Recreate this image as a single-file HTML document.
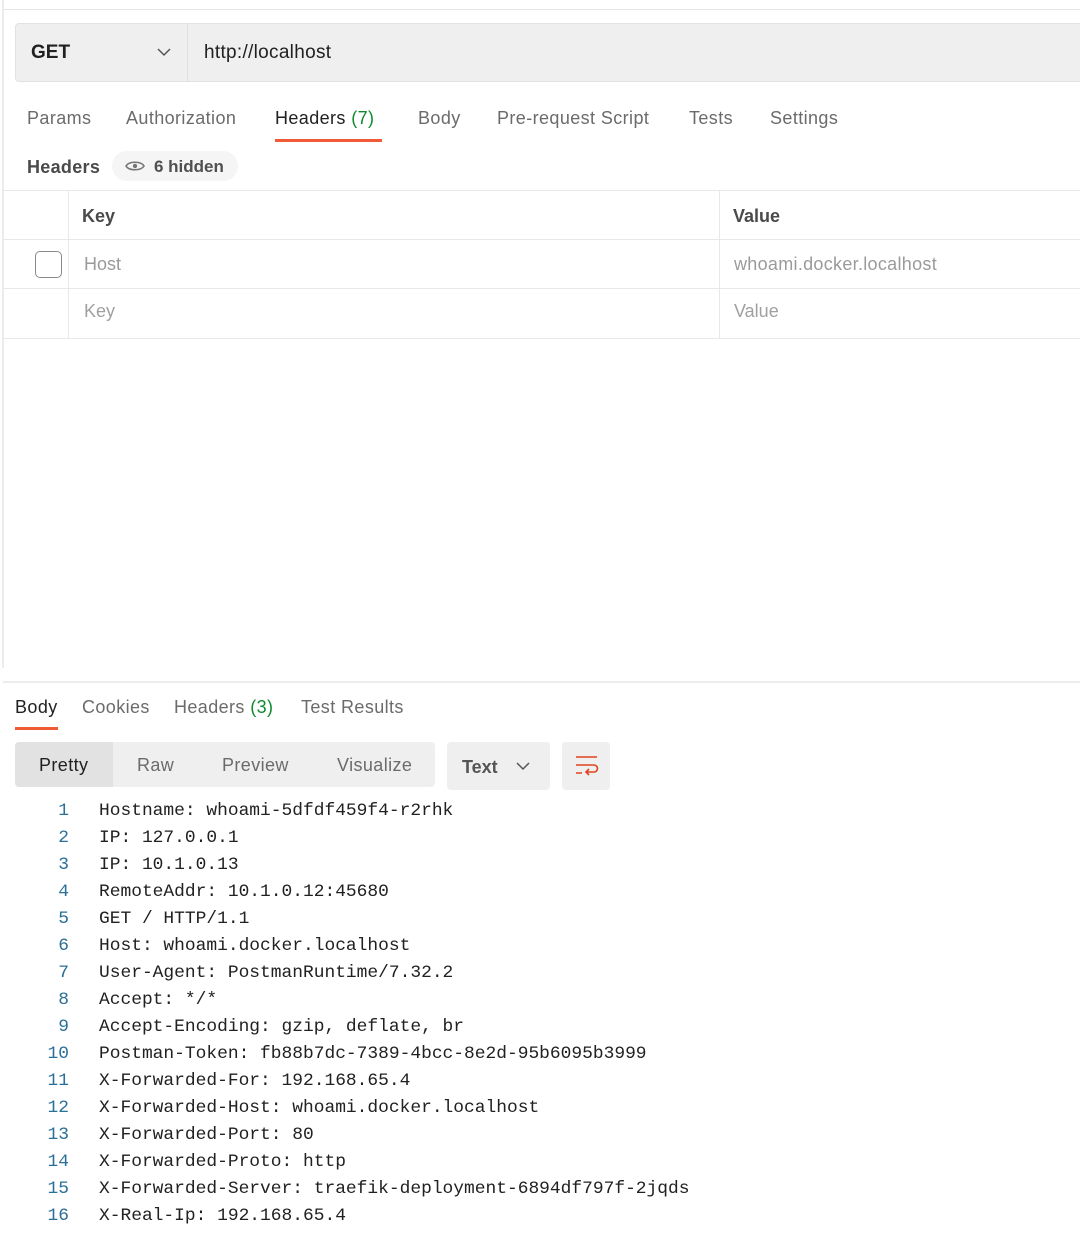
<!DOCTYPE html>
<html><head><meta charset="utf-8"><style>
*{margin:0;padding:0;box-sizing:border-box}
body{width:1080px;height:1234px;background:#fff;position:relative;overflow:hidden;font-family:"Liberation Sans",sans-serif;color:#212121}
.a{position:absolute;white-space:nowrap}
.t{font-size:18px;color:#6b6b6b;letter-spacing:0.4px}
.code{font-family:"Liberation Mono",monospace;font-size:17.9px;color:#212121}
.ln{position:absolute;width:69px;text-align:right;font-family:"Liberation Mono",monospace;font-size:17.9px;color:#2a6f97}
</style></head><body>
<div class="a" style="left:2px;top:0;width:2px;height:668px;background:#ececec"></div>
<div class="a" style="left:3px;top:9px;width:1077px;height:1px;background:#e6e6e6"></div>
<div class="a" style="left:15px;top:23px;width:1080px;height:59px;background:#efefef;border:1px solid #e2e2e2;border-radius:4px"></div>
<div class="a" style="left:187px;top:24px;width:1px;height:57px;background:#e0e0e0"></div>
<div class="a" style="left:31px;top:42px;font-size:19px;font-weight:bold;color:#212121">GET</div>
<svg class="a" style="left:156px;top:46px" width="16" height="12"><path d="M2 3l6 6 6-6" fill="none" stroke="#555" stroke-width="1.5"/></svg>
<div class="a" style="left:204px;top:42px;font-size:19px;color:#212121;letter-spacing:0.3px">http://localhost</div>

<div class="a t" style="left:27px;top:108px">Params</div>
<div class="a t" style="left:126px;top:108px">Authorization</div>
<div class="a t" style="left:275px;top:108px;color:#212121">Headers <span style="color:#0f8a2e">(7)</span></div>
<div class="a" style="left:275px;top:139px;width:107px;height:3px;background:#f05a36"></div>
<div class="a t" style="left:418px;top:108px">Body</div>
<div class="a t" style="left:497px;top:108px">Pre-request Script</div>
<div class="a t" style="left:689px;top:108px">Tests</div>
<div class="a t" style="left:770px;top:108px">Settings</div>

<div class="a" style="left:27px;top:157px;font-size:18px;font-weight:bold;color:#4a4a4a;letter-spacing:0.3px">Headers</div>
<div class="a" style="left:112px;top:151px;width:126px;height:30px;background:#f5f5f5;border-radius:15px"></div>
<svg class="a" style="left:125px;top:159px" width="20" height="14"><path d="M1 7C4 2 16 2 19 7C16 12 4 12 1 7Z" fill="none" stroke="#777" stroke-width="1.6"/><circle cx="10" cy="7" r="2.2" fill="#777"/></svg>
<div class="a" style="left:154px;top:157px;font-size:17px;font-weight:bold;color:#505050">6 hidden</div>

<div class="a" style="left:3px;top:190px;width:1077px;height:1px;background:#e8e8e8"></div>
<div class="a" style="left:3px;top:239px;width:1077px;height:1px;background:#e8e8e8"></div>
<div class="a" style="left:3px;top:288px;width:1077px;height:1px;background:#e8e8e8"></div>
<div class="a" style="left:3px;top:338px;width:1077px;height:1px;background:#e8e8e8"></div>
<div class="a" style="left:68px;top:190px;width:1px;height:148px;background:#e8e8e8"></div>
<div class="a" style="left:719px;top:190px;width:1px;height:148px;background:#e8e8e8"></div>
<div class="a" style="left:82px;top:206px;font-size:18px;font-weight:bold;color:#4a4a4a">Key</div>
<div class="a" style="left:733px;top:206px;font-size:18px;font-weight:bold;color:#4a4a4a">Value</div>
<div class="a" style="left:35px;top:251px;width:27px;height:27px;border:1.5px solid #8a8a8a;border-radius:5px"></div>
<div class="a" style="left:84px;top:254px;font-size:18px;color:#9a9a9a">Host</div>
<div class="a" style="left:734px;top:254px;font-size:18px;color:#9a9a9a;letter-spacing:0.3px">whoami.docker.localhost</div>
<div class="a" style="left:84px;top:301px;font-size:18px;color:#a0a0a0">Key</div>
<div class="a" style="left:734px;top:301px;font-size:18px;color:#a0a0a0">Value</div>

<div class="a" style="left:3px;top:681px;width:1077px;height:2px;background:#ececec"></div>
<div class="a t" style="left:15px;top:697px;color:#212121">Body</div>
<div class="a" style="left:15px;top:727px;width:43px;height:3px;background:#f05a36"></div>
<div class="a t" style="left:82px;top:697px">Cookies</div>
<div class="a t" style="left:174px;top:697px">Headers <span style="color:#0f8a2e">(3)</span></div>
<div class="a t" style="left:301px;top:697px">Test Results</div>

<div class="a" style="left:15px;top:742px;width:420px;height:45px;background:#efefef;border-radius:4px"></div>
<div class="a" style="left:15px;top:742px;width:98px;height:45px;background:#e2e2e2;border-radius:4px 0 0 4px"></div>
<div class="a t" style="left:39px;top:755px;color:#212121">Pretty</div>
<div class="a t" style="left:137px;top:755px">Raw</div>
<div class="a t" style="left:222px;top:755px">Preview</div>
<div class="a t" style="left:337px;top:755px">Visualize</div>
<div class="a" style="left:447px;top:742px;width:103px;height:48px;background:#efefef;border-radius:4px"></div>
<div class="a" style="left:462px;top:757px;font-size:18px;font-weight:bold;color:#555">Text</div>
<svg class="a" style="left:515px;top:760px" width="16" height="12"><path d="M2 3l6 6 6-6" fill="none" stroke="#555" stroke-width="1.5"/></svg>
<div class="a" style="left:562px;top:742px;width:48px;height:48px;background:#efefef;border-radius:4px"></div>
<svg class="a" style="left:574px;top:754px" width="26" height="24"><path d="M2 3h21M2 11h18a3.5 3.5 0 0 1 0 7h-7M15 15l-3 3 3 3M2 19h6" fill="none" stroke="#e0421e" stroke-width="1.6"/></svg>

<div class="ln" style="top:801px">1</div><div class="a code" style="left:99px;top:801px">Hostname: whoami-5dfdf459f4-r2rhk</div>
<div class="ln" style="top:828px">2</div><div class="a code" style="left:99px;top:828px">IP: 127.0.0.1</div>
<div class="ln" style="top:855px">3</div><div class="a code" style="left:99px;top:855px">IP: 10.1.0.13</div>
<div class="ln" style="top:882px">4</div><div class="a code" style="left:99px;top:882px">RemoteAddr: 10.1.0.12:45680</div>
<div class="ln" style="top:909px">5</div><div class="a code" style="left:99px;top:909px">GET / HTTP/1.1</div>
<div class="ln" style="top:936px">6</div><div class="a code" style="left:99px;top:936px">Host: whoami.docker.localhost</div>
<div class="ln" style="top:963px">7</div><div class="a code" style="left:99px;top:963px">User-Agent: PostmanRuntime/7.32.2</div>
<div class="ln" style="top:990px">8</div><div class="a code" style="left:99px;top:990px">Accept: */*</div>
<div class="ln" style="top:1017px">9</div><div class="a code" style="left:99px;top:1017px">Accept-Encoding: gzip, deflate, br</div>
<div class="ln" style="top:1044px">10</div><div class="a code" style="left:99px;top:1044px">Postman-Token: fb88b7dc-7389-4bcc-8e2d-95b6095b3999</div>
<div class="ln" style="top:1071px">11</div><div class="a code" style="left:99px;top:1071px">X-Forwarded-For: 192.168.65.4</div>
<div class="ln" style="top:1098px">12</div><div class="a code" style="left:99px;top:1098px">X-Forwarded-Host: whoami.docker.localhost</div>
<div class="ln" style="top:1125px">13</div><div class="a code" style="left:99px;top:1125px">X-Forwarded-Port: 80</div>
<div class="ln" style="top:1152px">14</div><div class="a code" style="left:99px;top:1152px">X-Forwarded-Proto: http</div>
<div class="ln" style="top:1179px">15</div><div class="a code" style="left:99px;top:1179px">X-Forwarded-Server: traefik-deployment-6894df797f-2jqds</div>
<div class="ln" style="top:1206px">16</div><div class="a code" style="left:99px;top:1206px">X-Real-Ip: 192.168.65.4</div>
</body></html>
